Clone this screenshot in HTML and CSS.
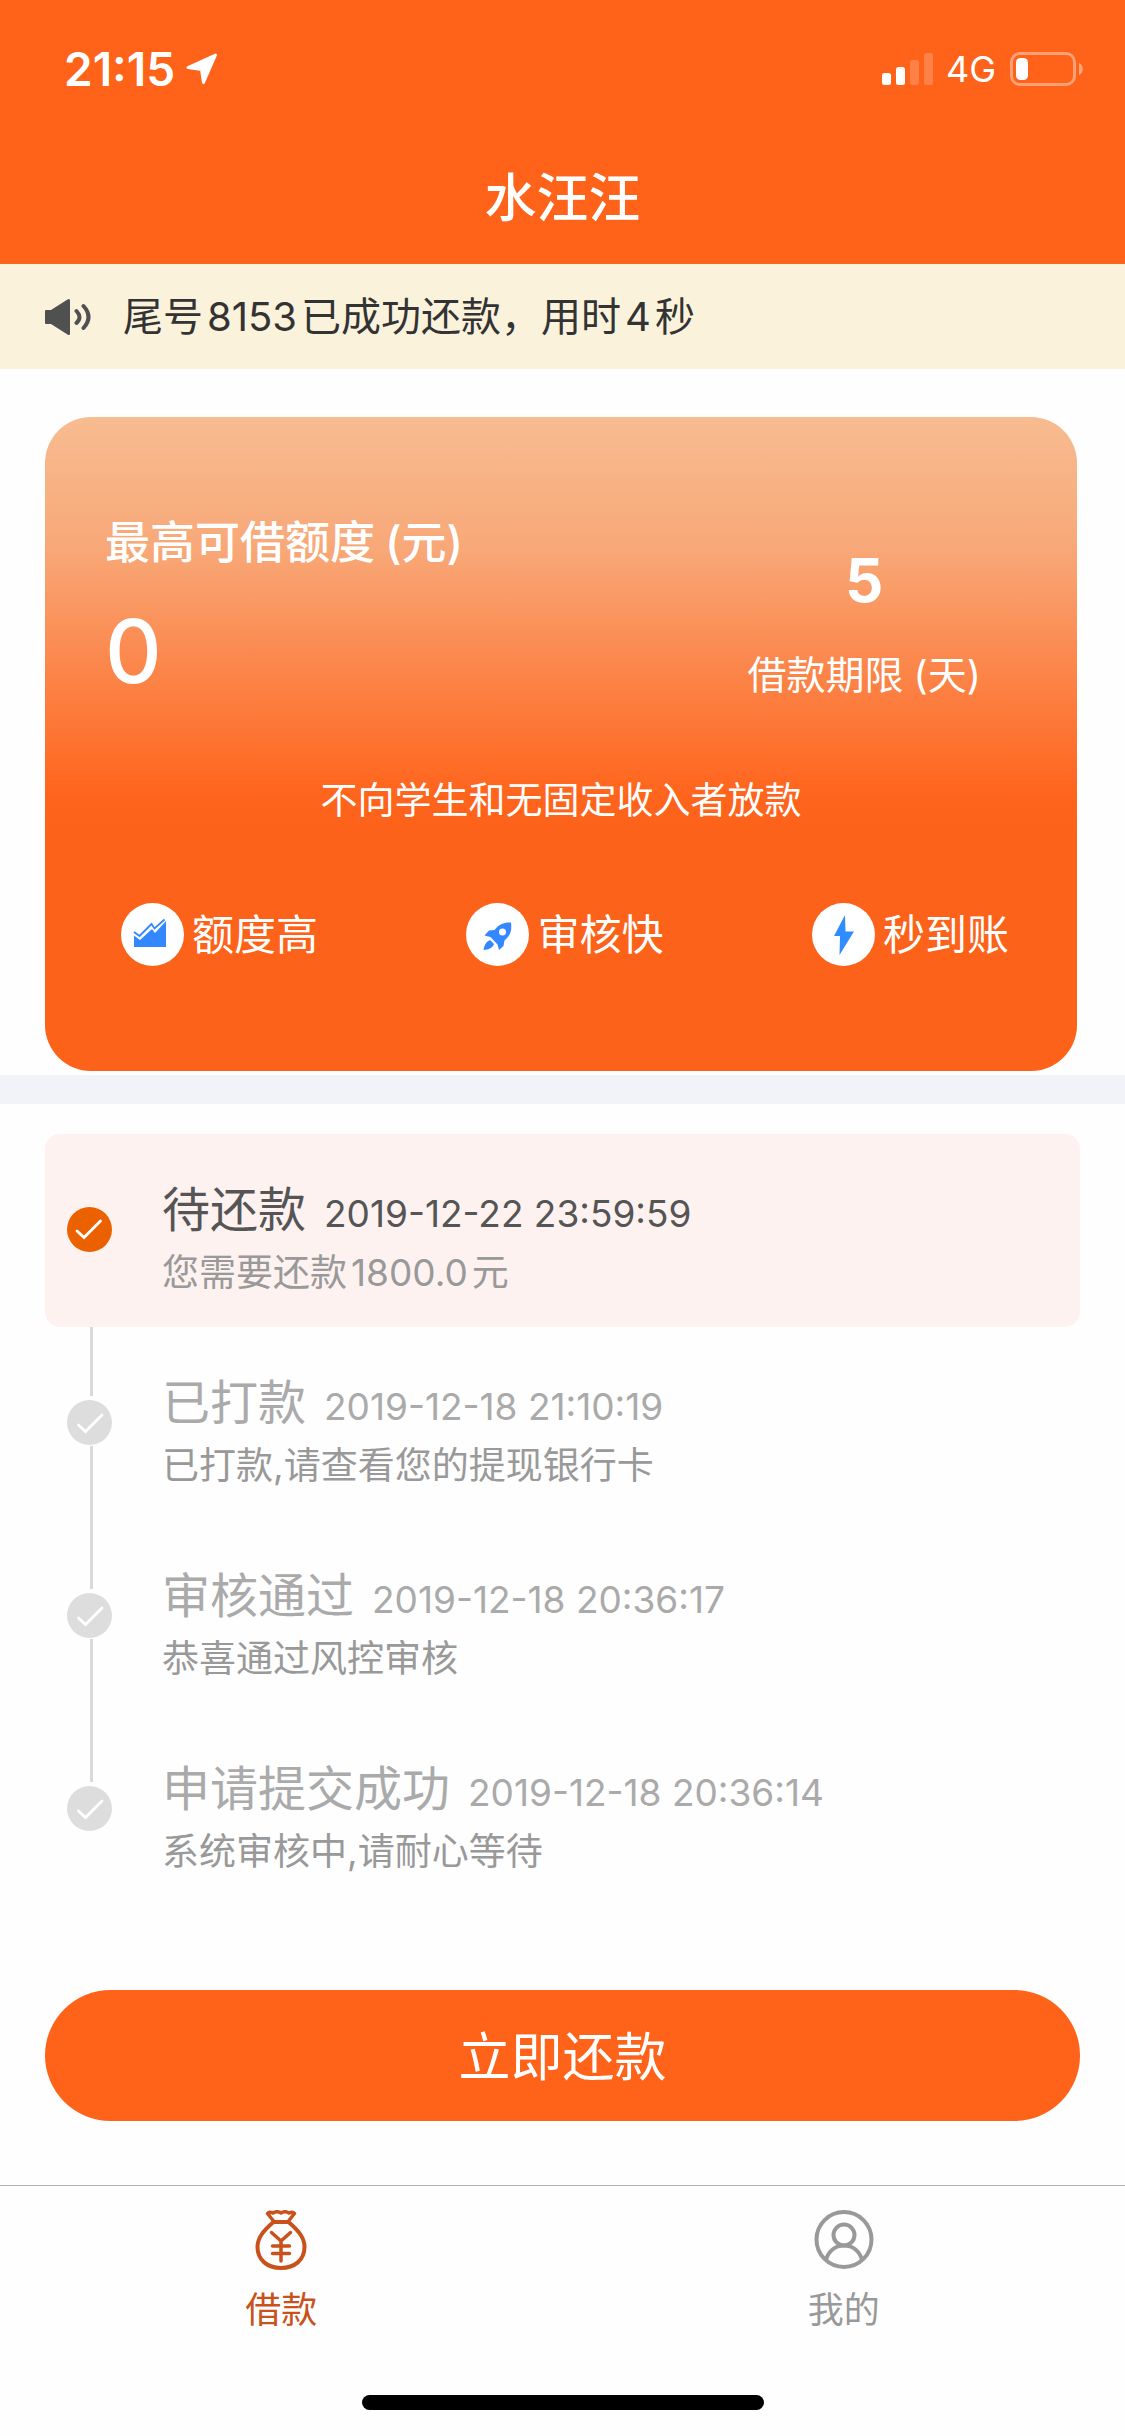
FILE: index.html
```html
<!DOCTYPE html>
<html lang="zh-CN">
<head>
<meta charset="utf-8">
<meta name="viewport" content="width=device-width, initial-scale=1">
<title>水汪汪</title>
<link rel="stylesheet" href="styles.css">
</head>
<body>
<header class="header">
  <div class="status">
    <span class="status-time">21:15</span>
    <svg class="status-arrow" width="32" height="32" viewBox="0 0 32 32" aria-hidden="true"><path d="M2 14.500L29.500 2 17.500 29.500 15.500 16.500z" fill="#fff" stroke="#fff" stroke-width="3" stroke-linejoin="round"/></svg>
    <svg class="status-signal" width="52" height="33" viewBox="0 0 52 33" fill="#fff" aria-hidden="true"><rect y="20" width="9" height="12" rx="2.500"/><rect x="14" y="14" width="9" height="18" rx="2.500"/><rect x="28" y="7" width="9" height="25" rx="2.500" opacity=".2"/><rect x="42" width="9" height="32" rx="2.500" opacity=".2"/></svg>
    <span class="status-net">4G</span>
    <svg class="status-battery" width="73" height="34" viewBox="0 0 73 34" aria-hidden="true"><rect x="1.500" y="1.500" width="63" height="31" rx="8.500" fill="none" stroke="#fff" stroke-opacity=".4" stroke-width="3"/><rect x="6" y="6" width="12" height="22" rx="4.500" fill="#fff"/><path d="M69 11c5 2 5 10 0 12z" fill="#fff" opacity=".45"/></svg>
  </div>
  <h1 class="title">水汪汪</h1>
</header>

<main class="main">
  <div class="notice">
    <svg width="47" height="38" viewBox="0 0 47 38" aria-hidden="true"><path d="M1 12h5L22.500 1.500q2.500-1.500 2.500 1v33q0 2.500-2.500 1L6 26H1q-1 0-1-1V13q0-1 1-1z" fill="#505050"/><path d="M31.500 13q6 6.500 0 12M38.500 8q10 11 0 22" fill="none" stroke="#505050" stroke-width="4" stroke-linecap="round"/></svg>
    <p class="notice-text">尾号<span class="num">8153</span>已成功还款，用时<span class="num">4</span>秒</p>
  </div>

  <section class="card">
    <div class="card-top">
      <div class="quota">
        <h2 class="quota-label">最高可借额度<span class="unit">(元)</span></h2>
        <strong class="quota-value">0</strong>
      </div>
      <div class="term">
        <strong class="term-value">5</strong>
        <span class="term-label">借款期限<span class="unit">(天)</span></span>
      </div>
    </div>
    <p class="card-note">不向学生和无固定收入者放款</p>
    <ul class="features">
      <li class="feature">
        <svg width="63" height="63" viewBox="0 0 63 63" aria-hidden="true"><circle cx="31.500" cy="31.500" r="31.500" fill="#fff"/><path d="M13 44V32.500l6 4.500 12-11 3 4 11-12v26z" fill="#3388ff"/><path d="M13 29l5.500 4 12-12 3 4.500L43.500 16.500" fill="none" stroke="#3388ff" stroke-width="1.800"/></svg>
        <span>额度高</span>
      </li>
      <li class="feature">
        <svg width="63" height="63" viewBox="0 0 63 63" aria-hidden="true"><circle cx="31.500" cy="31.500" r="31.500" fill="#fff"/><path d="M45 19.500c1 8-.5 13-6.500 18l-1 5.500-4.500 4-1.500-5.500-7-7.500-6-1.500 4.500-5 5.500-.500c4.500-6 10-8 16.500-7.500zM24 37l4 4c-1.500 4-5 5.500-10.500 6 1-5.500 3-8.500 6.500-10z" fill="#3388ff"/><circle cx="36.500" cy="29" r="3.500" fill="#fff"/></svg>
        <span>审核快</span>
      </li>
      <li class="feature">
        <svg width="63" height="63" viewBox="0 0 63 63" aria-hidden="true"><circle cx="31.500" cy="31.500" r="31.500" fill="#fff"/><path d="M33 12L22 33h6L27.500 52 42 28.500h-8.500z" fill="#2f8dff"/></svg>
        <span>秒到账</span>
      </li>
    </ul>
  </section>

  <ol class="timeline">
    <li class="step step-active">
      <svg class="step-mark" width="45" height="45" viewBox="0 0 45 45" aria-hidden="true"><circle cx="22.500" cy="22.500" r="22.500"/><path d="M10 24l7 6.500L33.500 14" fill="none" stroke="#fff" stroke-width="2.800" stroke-linecap="round"/></svg>
      <div class="step-body">
        <h3 class="step-title">待还款<time class="step-time">2019-12-22 23:59:59</time></h3>
        <p class="step-desc">您需要还款<span class="num">1800.0</span>元</p>
      </div>
    </li>
    <li class="step">
      <svg class="step-mark" width="45" height="45" viewBox="0 0 45 45" aria-hidden="true"><circle cx="22.500" cy="22.500" r="22.500"/><path d="M11.500 25l7 6.500L35 15" fill="none" stroke="#fff" stroke-width="2.800" stroke-linecap="round"/></svg>
      <div class="step-body">
        <h3 class="step-title">已打款<time class="step-time">2019-12-18 21:10:19</time></h3>
        <p class="step-desc">已打款,请查看您的提现银行卡</p>
      </div>
    </li>
    <li class="step">
      <svg class="step-mark" width="45" height="45" viewBox="0 0 45 45" aria-hidden="true"><circle cx="22.500" cy="22.500" r="22.500"/><path d="M11.500 25l7 6.500L35 15" fill="none" stroke="#fff" stroke-width="2.800" stroke-linecap="round"/></svg>
      <div class="step-body">
        <h3 class="step-title">审核通过<time class="step-time">2019-12-18 20:36:17</time></h3>
        <p class="step-desc">恭喜通过风控审核</p>
      </div>
    </li>
    <li class="step">
      <svg class="step-mark" width="45" height="45" viewBox="0 0 45 45" aria-hidden="true"><circle cx="22.500" cy="22.500" r="22.500"/><path d="M11.500 25l7 6.500L35 15" fill="none" stroke="#fff" stroke-width="2.800" stroke-linecap="round"/></svg>
      <div class="step-body">
        <h3 class="step-title">申请提交成功<time class="step-time">2019-12-18 20:36:14</time></h3>
        <p class="step-desc">系统审核中,请耐心等待</p>
      </div>
    </li>
  </ol>

  <button class="repay" type="button">立即还款</button>
</main>

<footer class="footer">
  <nav class="tabs">
    <a class="tab tab-current" href="#loan">
      <svg width="60" height="62" viewBox="0 0 60 62" fill="none" stroke="currentColor" stroke-width="4" stroke-linejoin="round" stroke-linecap="round" aria-hidden="true"><path d="M22.500 12h15C48 21 53.500 28 53.500 37c0 13-10 21-23.500 21S6.500 50 6.500 37C6.500 28 12 21 22.500 12z"/><path d="M22.500 11l-6-7.500q1.500-2 5.500-.500 4-2.500 8 0 4-2.500 8 0 4-1.500 5.500.5l-6 7.500" stroke-width="3.500"/><path d="M20.500 22.500l9.500 8.500 9.500-8.500M30 31v20M21.500 36h17M21.500 43.500h17" stroke-width="3.500"/></svg>
      <span>借款</span>
    </a>
    <a class="tab" href="#mine">
      <svg width="60" height="62" viewBox="0 0 60 62" fill="none" stroke="currentColor" stroke-width="4" aria-hidden="true"><circle cx="30" cy="29.500" r="27.500"/><circle cx="30" cy="25" r="10.500"/><path d="M12 49.500c3-9 10-14 18-14s15 5 18 14"/></svg>
      <span>我的</span>
    </a>
  </nav>
  <div class="home-bar"></div>
</footer>
</body>
</html>
```
FILE: styles.css
```css
* { box-sizing: border-box; }
body, h1, h2, h3, p, ul, ol { margin: 0; padding: 0; }
ul, ol { list-style: none; }
svg { display: block; flex: none; }

body {
  min-height: 100vh;
  display: flex;
  flex-direction: column;
  background: #fefefe;
  color: #333;
  font-family: Inter, "Noto Sans CJK SC", sans-serif;
}

.header { background: #ff6219; color: #fff; }
.status {
  display: flex;
  align-items: center;
  height: 138px;
  padding: 0 42px 0 64px;
}
.status-time { font-size: 46px; font-weight: 600; }
.status-arrow { margin-left: 11px; }
.status-signal { margin-left: auto; }
.status-net { margin: 0 14px 0 12px; font-size: 36px; }
.title {
  height: 126px;
  font-size: 52px;
  font-weight: 500;
  line-height: 122px;
  text-align: center;
}

.main { flex: 1; }
.notice {
  display: flex;
  align-items: center;
  gap: 31px;
  height: 105px;
  padding: 0 45px;
  background: #fbf2dc;
}
.notice-text { font-size: 40px; line-height: 60px; }
.num { margin: 0 4px; }
.unit { margin-left: 10px; }

.card {
  height: 654px;
  margin: 48px 48px 4px 45px;
  padding: 96px 60px 0;
  border-radius: 46px;
  background: linear-gradient(#f7bc90 0%, #f8a878 20%, #fb8a50 36%, #ff641c 58%, #fc6219 64%);
  color: #fff;
}
.card-top { display: flex; justify-content: space-between; }
.quota-label { font-size: 45px; font-weight: 500; line-height: 60px; }
.quota-value { display: block; font-size: 88px; font-weight: 500; line-height: 156px; }
.term {
  display: flex;
  flex-direction: column;
  align-items: center;
  padding: 31px 36px 0 0;
}
.term-value { font-size: 60px; font-weight: 700; line-height: 72px; }
.term-label { margin-top: 29px; font-size: 39px; line-height: 60px; }
.card-note { margin-top: 42px; font-size: 37px; line-height: 60px; text-align: center; }
.features { display: flex; justify-content: space-between; margin: 72px 8px 0 16px; }
.feature { display: flex; align-items: center; gap: 8px; font-size: 42px; line-height: 63px; }

.timeline { padding: 30px 45px 0; border-top: 29px solid #f2f3f8; }
.step {
  position: relative;
  display: flex;
  align-items: center;
  gap: 50px;
  height: 193px;
  padding-left: 22px;
  color: #aaa;
}
.step-active { border-radius: 15px; background: #fdf2f0; color: #555; }
.step-mark { margin-bottom: 3px; fill: #ddd; }
.step-active .step-mark { fill: #eb6100; }
.step:not(.step-active)::before {
  content: "";
  position: absolute;
  left: 45px;
  bottom: 124px;
  width: 3px;
  height: 143px;
  background: #d9d9d9;
}
.step:nth-child(2)::before { height: 69px; }
.step-body { padding-top: 18px; }
.step-title { font-size: 48px; font-weight: 400; line-height: 60px; }
.step-time { margin-left: 18px; font-size: 37px; }
.step-desc { margin-top: 2px; font-size: 37px; line-height: 54px; color: #999; }

.repay {
  display: block;
  width: calc(100% - 90px);
  height: 131px;
  margin: 84px 45px 0;
  padding: 0 0 4px;
  border: 0;
  border-radius: 66px;
  background: #ff6219;
  color: #fff;
  font: inherit;
  font-size: 52px;
}

.footer { border-top: 1px solid #b2b2b2; padding-bottom: 26px; }
.tabs { display: flex; height: 209px; }
.tab {
  flex: 1;
  display: flex;
  flex-direction: column;
  align-items: center;
  gap: 11px;
  padding-top: 24px;
  color: #999;
  font-size: 36px;
  line-height: 54px;
  text-decoration: none;
}
.tab-current { color: #c9511b; }
.home-bar { width: 402px; height: 15px; margin: 0 auto; border-radius: 8px; background: #000; }
```
